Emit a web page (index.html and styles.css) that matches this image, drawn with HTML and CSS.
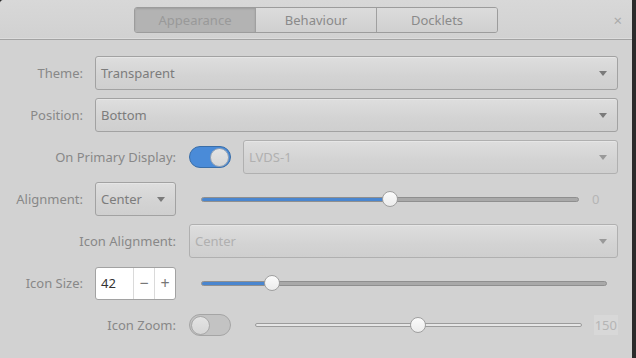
FILE: index.html
```html
<!DOCTYPE html>
<html lang="en">
<head>
  <meta charset="UTF-8">
  <title>Plank Preferences</title>
  <link rel="stylesheet" href="styles.css">
</head>
<body>
  <div class="window">
    <div class="titlebar">
      <div class="tabs">
        <div class="tab active">Appearance</div>
        <div class="tab">Behaviour</div>
        <div class="tab">Docklets</div>
      </div>
      <div class="close">×</div>
    </div>

    <div class="content">
      <div class="row">
        <label class="lbl">Theme:</label>
        <div class="combo grow"><span>Transparent</span><i class="arrow"></i></div>
      </div>

      <div class="row">
        <label class="lbl">Position:</label>
        <div class="combo grow"><span>Bottom</span><i class="arrow"></i></div>
      </div>

      <div class="row">
        <label class="lbl wide">On Primary Display:</label>
        <div class="switch on"><span class="knob"></span></div>
        <div class="combo grow disabled"><span>LVDS-1</span><i class="arrow"></i></div>
      </div>

      <div class="row">
        <label class="lbl">Alignment:</label>
        <div class="combo small"><span>Center</span><i class="arrow"></i></div>
        <div class="scale align-scale">
          <div class="track"><div class="fill" style="width: 50%"></div></div>
          <span class="handle" style="left: 50%"></span>
        </div>
        <span class="value">0</span>
      </div>

      <div class="row">
        <label class="lbl wide">Icon Alignment:</label>
        <div class="combo grow disabled"><span>Center</span><i class="arrow"></i></div>
      </div>

      <div class="row">
        <label class="lbl">Icon Size:</label>
        <div class="spin">
          <span class="spin-entry">42</span>
          <span class="spin-btn">−</span>
          <span class="spin-btn">+</span>
        </div>
        <div class="scale size-scale">
          <div class="track"><div class="fill" style="width: 17.5%"></div></div>
          <span class="handle" style="left: 17.5%"></span>
        </div>
      </div>

      <div class="row">
        <label class="lbl wide">Icon Zoom:</label>
        <div class="switch"><span class="knob"></span></div>
        <div class="scale zoom-scale">
          <div class="track thin"></div>
          <span class="handle" style="left: 50%"></span>
        </div>
        <span class="value boxed">150</span>
      </div>
    </div>
  </div>
</body>
</html>
```

FILE: styles.css
```css
body {
  margin: 0;
  background: #2b2b2b;
  font-family: "Noto Sans", "Open Sans", sans-serif;
  font-size: 13px;
  color: #888;
}

.window {
  width: 632px;
  height: 358px;
  background: #d2d2d2;
  border-top-left-radius: 4px;
  overflow: hidden;
}

.titlebar {
  height: 40px;
  box-sizing: border-box;
  border-bottom: 1px solid #a3a3a3;
  box-shadow: inset 0 -7px 0 -6px #dcdcdc;
  display: flex;
  justify-content: center;
  align-items: flex-start;
  padding-top: 7px;
  position: relative;
  background: linear-gradient(#d8d8d8, #d1d1d1);
}

.tabs {
  display: flex;
  border: 1px solid #9c9c9c;
  border-radius: 3px;
  overflow: hidden;
  height: 26px;
  box-sizing: border-box;
}

.tab {
  width: 120px;
  display: flex;
  align-items: center;
  justify-content: center;
  background: linear-gradient(#dcdcdc, #d0d0d0);
  color: #8a8a8a;
  border-left: 1px solid #a0a0a0;
}

.tab:first-child {
  border-left: none;
}

.tab.active {
  background: #b3b3b3;
  color: #999;
  box-shadow: inset 0 1px 2px rgba(0, 0, 0, 0.12);
}

.close {
  position: absolute;
  right: 10px;
  top: 10px;
  font-size: 15px;
  color: #aaa;
}

.content {
  padding: 16px 14px 0 0;
  display: flex;
  flex-direction: column;
  gap: 8px;
}

.row {
  display: flex;
  align-items: center;
  height: 34px;
}

.lbl {
  width: 83px;
  text-align: right;
  margin-right: 12px;
  flex-shrink: 0;
}

.lbl.wide {
  width: 176px;
  margin-right: 13px;
}

.combo {
  height: 34px;
  box-sizing: border-box;
  border: 1px solid #a2a2a2;
  border-radius: 3px;
  background: linear-gradient(#dedede, #d3d3d3 60%, #cfcfcf);
  box-shadow: inset 0 1px 0 #e6e6e6;
  display: flex;
  align-items: center;
  padding: 0 10px 0 5px;
  color: #7c7c7c;
}

.combo span {
  flex: 1;
}

.combo.grow {
  flex: 1;
}

.combo.small {
  width: 81px;
}

.combo.disabled {
  color: #b0b0b0;
  border-color: #b0b0b0;
}

.arrow {
  width: 0;
  height: 0;
  border-left: 4px solid transparent;
  border-right: 4px solid transparent;
  border-top: 5px solid #7a7a7a;
}

.combo.disabled .arrow {
  border-top-color: #999;
}

.switch {
  width: 42px;
  height: 22px;
  box-sizing: border-box;
  border-radius: 11px;
  border: 1px solid #a5a5a5;
  background: #c3c3c3;
  display: flex;
  align-items: center;
  padding: 0 1px;
  flex-shrink: 0;
}

.switch .knob {
  width: 19px;
  height: 19px;
  border-radius: 50%;
  background: linear-gradient(#e4e4e4, #d6d6d6);
  border: 1px solid #a8a8a8;
  box-sizing: border-box;
}

.switch.on {
  background: #4a8bd8;
  border-color: #3a6ea8;
  justify-content: flex-end;
  margin-right: 12px;
}

.switch.on .knob {
  border-color: #9aa6b5;
}

.scale {
  position: relative;
  height: 18px;
  display: flex;
  align-items: center;
}

.align-scale {
  width: 378px;
  margin-left: 25px;
}

.size-scale {
  width: 406px;
  margin-left: 25px;
}

.zoom-scale {
  width: 327px;
  margin-left: 24px;
}

.track {
  width: 100%;
  height: 5px;
  box-sizing: border-box;
  border: 1px solid #8f8f8f;
  border-radius: 3px;
  background: #a9a9a9;
  overflow: hidden;
}

.track.thin {
  height: 4px;
  background: #e6e6e6;
  border-color: #9c9c9c;
}

.fill {
  height: 100%;
  background: #4a86cf;
}

.handle {
  position: absolute;
  top: 1px;
  width: 16px;
  height: 16px;
  margin-left: -8px;
  box-sizing: border-box;
  border-radius: 50%;
  border: 1px solid #a0a0a0;
  background: linear-gradient(#fbfbfb, #ececec);
}

.value {
  margin-left: 13px;
  color: #b5b5b5;
}

.value.boxed {
  background: #d8d8d8;
  padding: 1px 1px;
  margin-left: 12px;
}

.spin {
  width: 81px;
  height: 33px;
  box-sizing: border-box;
  border: 1px solid #a2a2a2;
  border-radius: 3px;
  background: #fff;
  display: flex;
  align-items: stretch;
  flex-shrink: 0;
}

.spin-entry {
  flex: 1;
  display: flex;
  align-items: center;
  padding-left: 5px;
  color: #333;
}

.spin-btn {
  width: 20px;
  display: flex;
  align-items: center;
  justify-content: center;
  border-left: 1px solid #dadada;
  color: #777;
  font-size: 16px;
}
```
